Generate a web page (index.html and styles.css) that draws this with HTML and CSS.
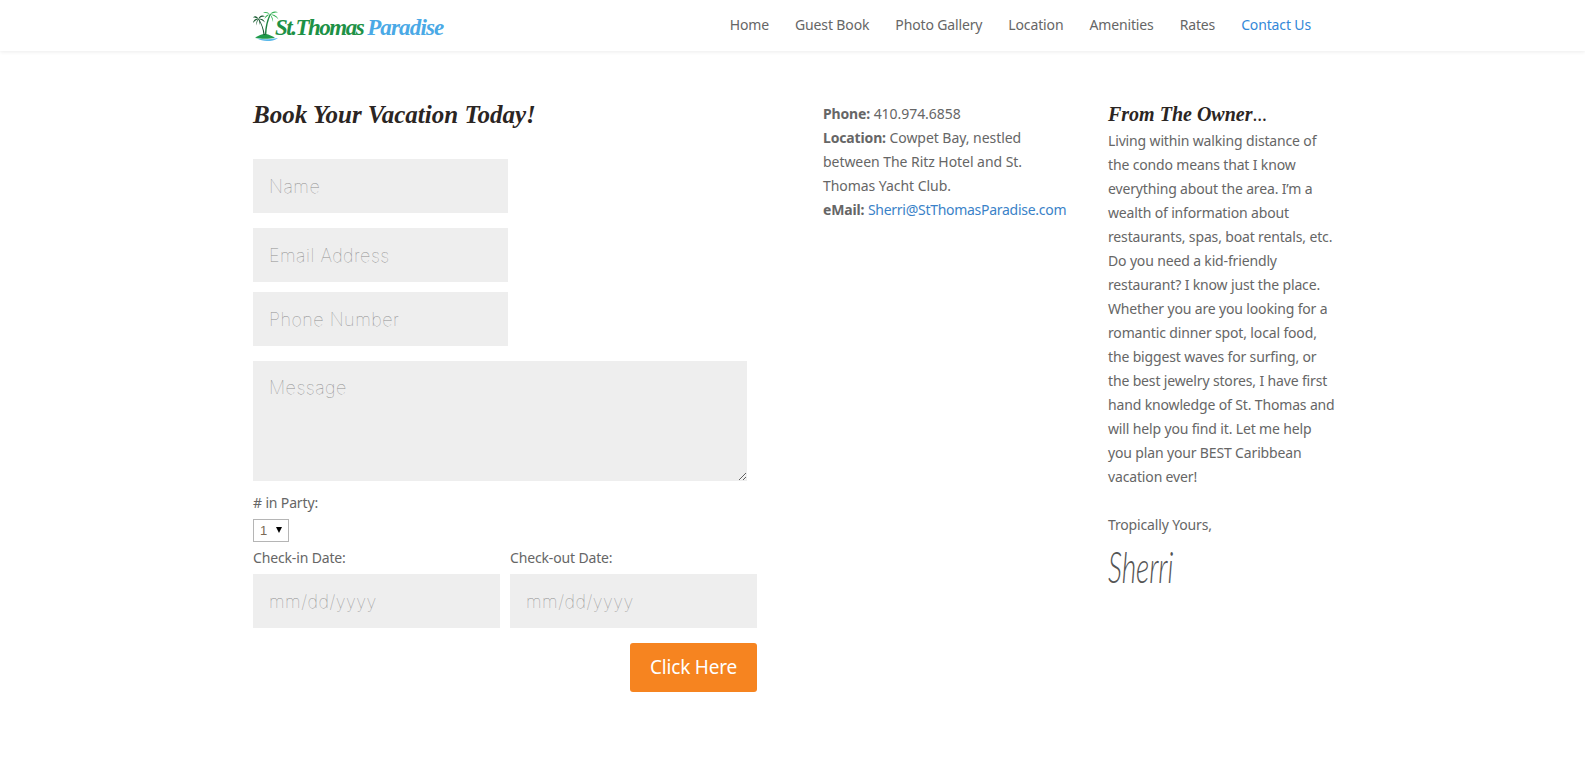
FILE: index.html
```html
<!DOCTYPE html>
<html lang="en">
<head>
<meta charset="utf-8">
<title>St.Thomas Paradise - Contact Us</title>
<link rel="stylesheet" href="styles.css">
</head>
<body>
<header class="site-header">
  <div class="header-inner">
    <a class="logo" href="#">
      <svg class="logo-icon" width="26" height="30" viewBox="0 0 26 30" aria-hidden="true">
        <path d="M2 27C6 24 10 22.500 13 23c3 .5 6 2 9 4-6 1-14 1-20 0z" fill="#1f9a4a"/>
        <path d="M4 27.500c6 1.200 13 1 21-.5-3 2.500-7 3-11 3-4 0-7-1-10-2.500z" fill="#5ab8ea"/>
        <path d="M5 8c3 4 5 10 5.500 16h1.300C11 18 8.500 12 6 8z" fill="#15542f"/>
        <path d="M17 3c-3 5-5 13-5 21h1.300c.2-8 2-15 4.700-21z" fill="#1e8040"/>
        <path d="M5.500 8C4 4.500 1.500 4.500 0 6.500c2 0 3.500.3 5.500 1.500zM5.500 8C3 7 .8 8.500 0 12c1.500-2 3.200-3 5.500-4zM5.500 8C3.800 9 3 11.500 3.500 14.500 3.800 12 4.500 10 5.500 8zM5.500 8C6 4.500 9.500 3.500 12 5.500 9.500 5.300 7.500 6 5.500 8zM5.500 8c2.500-.7 5-.2 6.500 3.500C10 9.500 8 8.500 5.500 8zM5.500 8c1.300 1.500 2 3.500 1.500 6C6.500 12 6 10 5.500 8z" fill="#17592f"/>
        <path d="M17 3.500C15 .5 12 .3 10 2c2.500-.2 4.500 0 7 1.500zM17 3.500c-2.500-.5-5 1-5.500 4.500C13 6 15 4.500 17 3.500zM17 3.500C18.500 .5 22.500-.5 25 1.500c-3 0-5.500.5-8 2zM17 3.500c3-.5 7 .5 8.500 5C23.500 6 20.500 4.500 17 3.500zM17 3.500c2 1.500 3.500 4 3 7.500-.8-3-1.800-5.500-3-7.500zM17 3.500c-1 2-1.800 4-1.500 6.500.3-2.500.8-4.500 1.500-6.500z" fill="#36b457"/>
      </svg>
      <span class="logo-text"><span class="logo-green">St.Thomas</span><span class="logo-blue">Paradise</span></span>
    </a>
    <nav class="nav">
      <a href="#">Home</a>
      <a href="#">Guest Book</a>
      <a href="#">Photo Gallery</a>
      <a href="#">Location</a>
      <a href="#">Amenities</a>
      <a href="#">Rates</a>
      <a class="active" href="#">Contact Us</a>
    </nav>
  </div>
</header>

<main class="content">
  <section class="form-col">
    <h1 class="script-title big">Book Your Vacation Today!</h1>
    <form class="form">
      <input class="field short gap-a" type="text" placeholder="Name">
      <input class="field short gap-b" type="text" placeholder="Email Address">
      <input class="field short gap-a" type="text" placeholder="Phone Number">
      <textarea class="field area" placeholder="Message"></textarea>
      <label class="label party">
        <span># in Party:</span>
        <span class="select-wrap"><select class="select"><option>1</option><option>2</option><option>3</option></select></span>
      </label>
      <div class="dates">
        <label class="label date"><span>Check-in Date:</span><input class="field" type="text" placeholder="mm/dd/yyyy"></label>
        <label class="label date"><span>Check-out Date:</span><input class="field" type="text" placeholder="mm/dd/yyyy"></label>
      </div>
      <div class="actions"><button class="submit" type="button">Click Here</button></div>
    </form>
  </section>

  <section class="info-col">
    <p><b>Phone:</b> 410.974.6858<br>
    <b>Location:</b> Cowpet Bay, nestled between The Ritz Hotel and St. Thomas Yacht Club.<br>
    <b>eMail:</b> <a href="#">Sherri@StThomasParadise.com</a></p>
  </section>

  <section class="owner-col">
    <h2 class="script-title small">From The Owner<span class="dots">...</span></h2>
    <p>Living within walking distance of the condo means that I know everything about the area. I’m a wealth of information about restaurants, spas, boat rentals, etc. Do you need a kid-friendly restaurant? I know just the place. Whether you are you looking for a romantic dinner spot, local food, the biggest waves for surfing, or the best jewelry stores, I have first hand knowledge of St. Thomas and will help you find it. Let me help you plan your BEST Caribbean vacation ever!</p>
    <p class="closing">Tropically Yours,</p>
    <div class="signature">Sherri</div>
  </section>
</main>
</body>
</html>
```

FILE: styles.css
```css
* { box-sizing: border-box; }
html, body { margin: 0; padding: 0; background: #fff; }
body {
  font-family: "Noto Sans", "Open Sans", sans-serif;
  font-size: 14px;
  line-height: 24px;
  letter-spacing: -0.15px;
  color: #666;
  height: 760px;
  overflow: hidden;
}
a { text-decoration: none; color: inherit; }
p { margin: 0; }

.site-header {
  height: 51px;
  background: #fff;
  box-shadow: 0 1px 4px rgba(0, 0, 0, 0.08);
}
.header-inner {
  width: 1080px;
  margin-left: 253px;
  height: 51px;
  display: flex;
  justify-content: space-between;
  align-items: center;
}
.logo { display: flex; align-items: center; }
.logo-icon { display: block; margin-right: -4px; }
.logo-text {
  font-family: "Liberation Serif", serif;
  font-style: italic;
  font-weight: 700;
  font-size: 23px;
  line-height: 30px;
  white-space: nowrap;
  padding-top: 5px;
}
.logo-green { color: #1d9146; margin-right: 4px; letter-spacing: -1.5px; }
.logo-blue { color: #4aa9e6; letter-spacing: -0.85px; }

.nav { display: flex; gap: 26px; margin-right: 22px; padding-bottom: 2px; letter-spacing: -0.14px; }
.nav a { color: #666; }
.nav a.active { color: #3388d8; }

.content {
  display: grid;
  grid-template-columns: 504px 351px 230px;
  margin-left: 253px;
}
.form-col { padding-top: 49px; }
.info-col { margin-left: 66px; width: 248px; padding-top: 51px; letter-spacing: -0.05px; }
.owner-col { padding-top: 48px; }

.script-title {
  font-family: "Liberation Serif", serif;
  font-style: italic;
  font-weight: 700;
  color: #2b2523;
  margin: 0;
  letter-spacing: 0;
}
.big { font-size: 25px; line-height: 30px; margin-bottom: 29px; }
.small { font-size: 20px; line-height: 30px; margin-bottom: 0; }
.dots { font-style: normal; font-weight: 400; font-family: "Noto Sans", sans-serif; font-size: 18px; }

.info-col a { color: #3a82c8; letter-spacing: -0.28px; }
.info-col b { color: #666; letter-spacing: -0.15px; }

.form { display: flex; flex-direction: column; align-items: flex-start; }
.field {
  display: block;
  border: 0;
  background: #eee;
  padding: 0 16px;
  height: 54px;
  font-family: "Inter", sans-serif;
  font-weight: 100;
  font-size: 18px;
  letter-spacing: 0.5px;
  color: #999;
  border-radius: 0;
  outline: 0;
}
.field::placeholder { color: #8f8f8f; opacity: 1; }
.short { width: 255px; }
.gap-a { margin-bottom: 15px; }
.gap-b { margin-bottom: 10px; }
.area {
  width: 494px;
  height: 120px;
  padding-top: 15px;
  line-height: 24px;
  margin-bottom: 10px;
}
.label { display: block; font-size: 14px; line-height: 24px; color: #666; }
.party { margin-bottom: 4px; }
.party > span:first-child { display: block; height: 28px; }
.select-wrap { display: block; position: relative; width: 36px; height: 23px; }
.select-wrap::after {
  content: "";
  position: absolute;
  left: 23px;
  top: 8px;
  border-left: 3.500px solid transparent;
  border-right: 3.500px solid transparent;
  border-top: 6px solid #000;
  pointer-events: none;
}
.select {
  display: block;
  appearance: none;
  width: 36px;
  height: 23px;
  border: 1px solid #b5b5b5;
  background: #fff;
  font-family: "Liberation Sans", sans-serif;
  font-size: 13px;
  letter-spacing: 0;
  color: #7a6a55;
  padding: 0 0 0 6px;
  border-radius: 0;
}
.dates { display: flex; gap: 10px; width: 504px; margin-bottom: 15px; }
.date { width: 247px; }
.date > span { display: block; height: 28px; }
.date .field { width: 247px; }
.actions { width: 504px; display: flex; justify-content: flex-end; }
.submit {
  width: 127px;
  height: 49px;
  border: 0;
  border-radius: 3px;
  background: #f68420;
  color: #fff;
  font-family: "Noto Sans", sans-serif;
  font-size: 19px;
  letter-spacing: -0.2px;
  padding: 0 0 2px;
}
.closing { margin-top: 24px; }
.signature {
  font-family: "Lato", sans-serif;
  font-style: italic;
  font-weight: 300;
  font-size: 44px;
  line-height: 50px;
  color: #555;
  margin-top: 4px;
  width: 100px;
  transform: scaleX(0.64);
  transform-origin: left center;
}
```
